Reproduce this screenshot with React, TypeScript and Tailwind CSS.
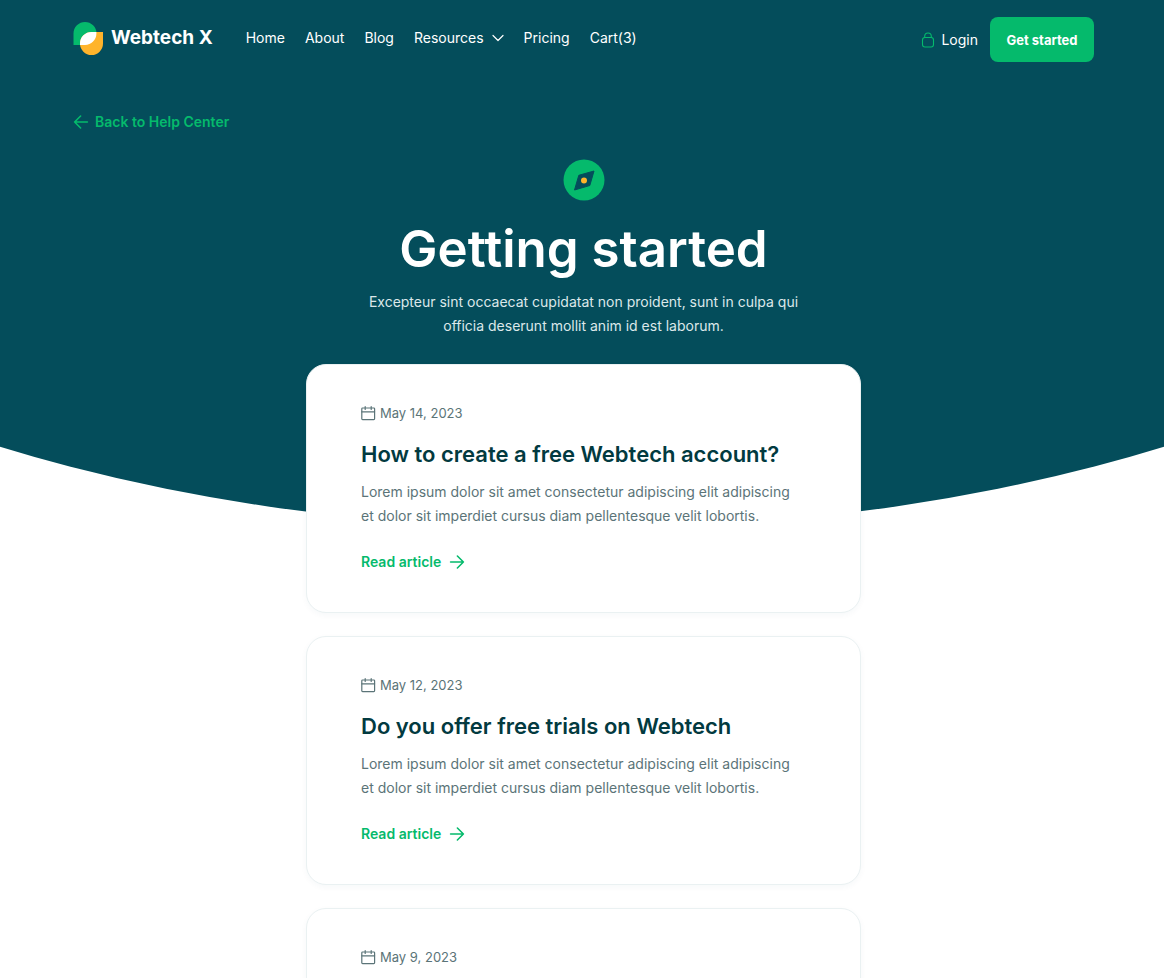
import React from "react";

function ArrowIcon({ className }: { className?: string }) {
  return (
    <svg viewBox="0 0 16 16" className={className} fill="none" stroke="currentColor" strokeWidth="1.6" strokeLinecap="round" strokeLinejoin="round" aria-hidden="true">
      <path d="M1.6 8h12.8M8.4 2l6 6-6 6" />
    </svg>
  );
}

function CalendarIcon() {
  return (
    <svg viewBox="0 0 16 16" className="size-4 shrink-0" fill="none" stroke="currentColor" strokeWidth="1.2" strokeLinecap="round" strokeLinejoin="round" aria-hidden="true">
      <rect x="0.8" y="3" width="12.8" height="11.6" rx="0.8" />
      <path d="M0.8 6.8h12.8M4.2 1.6v2.8M10.2 1.6v2.8" />
    </svg>
  );
}

function Logo() {
  return (
    <a href="#" className="flex items-center gap-2 text-[19px] leading-7 font-bold text-white">
      <svg viewBox="0 0 30 33" className="h-[33px] w-[30px]" aria-hidden="true">
        <path d="M0.5 23V11.5a11.5 11.5 0 0 1 23 0A11.5 11.5 0 0 1 12 23Z" fill="#05ba6c" />
        <path d="M30 10v11.5a11.5 11.5 0 0 1-23 0A11.5 11.5 0 0 1 18.5 10Z" fill="#ffb42b" />
        <path d="M23.4 10H18.5A11.5 11.5 0 0 0 7 21.5V23h5A11.5 11.5 0 0 0 23.4 11.5Z" fill="#fff" />
      </svg>
      <span>Webtech X</span>
    </a>
  );
}

function Header() {
  return (
    <header className="flex items-center text-[14px] leading-5 text-white">
      <div className="flex flex-1 items-center gap-[33px] pb-[3px]">
        <Logo />
        <nav className="flex items-center gap-5">
          <a href="#">Home</a>
          <a href="#">About</a>
          <a href="#">Blog</a>
          <button type="button" className="flex items-center gap-2">
            Resources
            <svg viewBox="0 0 12 8" className="h-2 w-3" fill="none" stroke="currentColor" strokeWidth="1.2" strokeLinecap="round" strokeLinejoin="round" aria-hidden="true">
              <path d="M1 1.5l5 5 5-5" />
            </svg>
          </button>
          <a href="#">Pricing</a>
          <a href="#">Cart(3)</a>
        </nav>
      </div>
      <a href="#" className="mr-3 flex items-center gap-1.5">
        <svg viewBox="0 0 14 16" className="h-4 w-3.5" fill="none" stroke="#05ba6c" strokeWidth="1.1" aria-hidden="true">
          <rect x="1.5" y="5.5" width="11" height="9.5" rx="2.4" />
          <path d="M3.7 5.5V4.3a3.3 3.3 0 0 1 6.6 0v1.2" />
        </svg>
        Login
      </a>
      <button type="button" className="h-[45px] w-[104px] rounded-lg bg-[#05ba6c] text-[13px] font-bold">Get started</button>
    </header>
  );
}

const articles = [
  { date: "May 14, 2023", title: "How to create a free Webtech account?" },
  { date: "May 12, 2023", title: "Do you offer free trials on Webtech" },
  { date: "May 9, 2023", title: "" },
];

function ArticleCard({ date, title }: { date: string; title: string }) {
  return (
    <article className="min-h-[249px] rounded-[20px] border border-[#eaf1f2] bg-white px-[54px] pt-[38px] pb-[39px] shadow-[0_2px_6px_rgba(20,80,90,0.04)]">
      <p className="flex items-center gap-[3px] text-[13px] leading-5 text-[#5b7478]">
        <CalendarIcon />
        {date}
      </p>
      {title && (
        <>
          <h2 className="mt-[15px] text-[22px] leading-8 font-semibold text-[#023a40]">{title}</h2>
          <p className="mt-[10px] text-[14px] leading-6 text-[#5b7478]">
            Lorem ipsum dolor sit amet consectetur adipiscing elit adipiscing et dolor sit imperdiet cursus diam pellentesque velit lobortis.
          </p>
          <a href="#" className="mt-6 inline-flex items-center gap-2 text-[14px] leading-5 font-semibold text-[#05ba6c]">
            Read article
            <ArrowIcon className="size-4" />
          </a>
        </>
      )}
    </article>
  );
}

export default function App() {
  return (
    <div className="relative isolate h-screen overflow-hidden bg-white pt-[17px] pr-[70px] pl-[73px] font-['Inter',sans-serif]">
      <div className="absolute inset-x-0 top-0 -z-10 h-[532px] bg-[#044d5b] [clip-path:ellipse(1087px_529px_at_50%_0px)]" />
      <Header />
      <main>
        <a href="#" className="mt-[50px] inline-flex items-center gap-1.5 text-[14px] leading-5 font-semibold text-[#05ba6c]">
          <ArrowIcon className="size-4 rotate-180" />
          Back to Help Center
        </a>
        <div className="mt-[23px] flex flex-col items-center text-center text-white">
          <svg viewBox="0 0 42 42" className="size-[42px]" aria-hidden="true">
            <circle cx="21" cy="21" r="20.5" fill="#05ba6c" />
            <path d="M31 12 26.8 26.5 11.5 31 15.8 16.3Z" fill="#044d5b" stroke="#044d5b" strokeLinejoin="round" />
            <circle cx="21" cy="21.5" r="3" fill="#ffb42b" />
          </svg>
          <h1 className="mt-4 text-[51px] leading-[64px] font-semibold">Getting started</h1>
          <p className="mt-[9px] max-w-[460px] text-[14px] leading-6 text-[#dce8ea]">
            Excepteur sint occaecat cupidatat non proident, sunt in culpa qui officia deserunt mollit anim id est laborum.
          </p>
        </div>
        <div className="mx-auto mt-[26px] flex max-w-[555px] flex-col gap-[23px]">
          {articles.map((article) => (
            <ArticleCard key={article.date} {...article} />
          ))}
        </div>
      </main>
    </div>
  );
}
